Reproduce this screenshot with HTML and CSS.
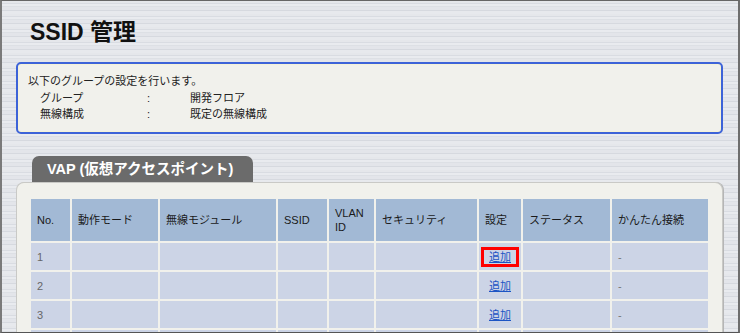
FILE: index.html
```html
<!DOCTYPE html>
<html lang="ja">
<head>
<meta charset="utf-8">
<title>SSID 管理</title>
<link rel="stylesheet" href="styles.css">
</head>
<body>
<div class="frame">
  <h1 class="title">SSID 管理</h1>
  <div class="info">
    <div class="info-lead">以下のグループの設定を行います。</div>
    <div class="info-grid">
      <span>グループ</span><span>:</span><span>開発フロア</span>
      <span>無線構成</span><span>:</span><span>既定の無線構成</span>
    </div>
  </div>
  <div class="tab">VAP (仮想アクセスポイント)</div>
  <div class="panel">
    <table class="vap">
      <thead>
        <tr>
          <th class="c-no">No.</th>
          <th class="c-mode">動作モード</th>
          <th class="c-mod">無線モジュール</th>
          <th class="c-ssid">SSID</th>
          <th class="c-vlan">VLAN ID</th>
          <th class="c-sec">セキュリティ</th>
          <th class="c-set">設定</th>
          <th class="c-stat">ステータス</th>
          <th class="c-easy">かんたん接続</th>
        </tr>
      </thead>
      <tbody>
        <tr>
          <td class="num">1</td><td></td><td></td><td></td><td></td><td></td>
          <td class="set"><span class="hl"><a href="#">追加</a></span></td><td></td><td class="dash">-</td>
        </tr>
        <tr>
          <td class="num">2</td><td></td><td></td><td></td><td></td><td></td>
          <td class="set"><a href="#">追加</a></td><td></td><td class="dash">-</td>
        </tr>
        <tr>
          <td class="num">3</td><td></td><td></td><td></td><td></td><td></td>
          <td class="set"><a href="#">追加</a></td><td></td><td class="dash">-</td>
        </tr>
        <tr>
          <td></td><td></td><td></td><td></td><td></td><td></td><td></td><td></td><td></td>
        </tr>
      </tbody>
    </table>
  </div>
</div>
</body>
</html>
```

FILE: styles.css
```css
html, body {
  margin: 0;
  padding: 0;
}
body {
  font-family: "Liberation Sans", "Noto Sans CJK JP", sans-serif;
  color: #222;
}
.frame {
  box-sizing: border-box;
  width: 740px;
  height: 333px;
  overflow: hidden;
  border-top: 1px solid #666;
  border-left: 2px solid #7a7a7a;
  border-right: 2px solid #6e6e6e;
  border-bottom: 1px solid #555;
  background-color: #e2e4e9;
  background-image: repeating-linear-gradient(to bottom,
    #e5e7eb 0px, #e5e7eb 2px,
    #d9dce2 2px, #d9dce2 3px,
    #e9ebef 3px, #e9ebef 5px,
    #dde0e5 5px, #dde0e5 6px,
    #e3e5ea 6px, #e3e5ea 9px,
    #d6d9df 9px, #d6d9df 10px,
    #e7e9ed 10px, #e7e9ed 13px);
  padding-top: 18px;
}
.title {
  margin: 0 0 0 28px;
  font-size: 23px;
  line-height: 26px;
  font-weight: bold;
  color: #111;
}
.info {
  box-sizing: border-box;
  margin: 17px 0 0 14px;
  width: 707px;
  height: 72px;
  border: 2px solid #3d63d8;
  border-radius: 5px;
  background: #f1f1ec;
  box-shadow: inset 0 0 0 1px #f5f2d8;
  padding: 9px 10px 0 10px;
  font-size: 11px;
  line-height: 16.5px;
  color: #222;
}
.info-grid {
  display: grid;
  grid-template-columns: 107px 43px auto;
  padding-left: 12px;
}
.tab {
  display: inline-block;
  margin: 22px 0 0 30px;
  height: 26px;
  line-height: 27px;
  padding: 0 20px 0 15px;
  background: #6b6b6b;
  color: #fff;
  font-size: 14.5px;
  font-weight: bold;
  border-radius: 7px 7px 0 0;
  vertical-align: top;
}
.panel {
  box-sizing: border-box;
  margin-left: 14px;
  width: 707px;
  height: 200px;
  background: #f1f1ec;
  border: 1px solid #c9c9c6;
  border-bottom: none;
  border-radius: 8px 8px 0 0;
  box-shadow: 1px 0 0 #b5b5b5;
  padding: 14px 0 0 12px;
}
.vap {
  border-collapse: separate;
  border-spacing: 2px;
  font-size: 11px;
  line-height: 14px;
}
.vap th, .vap td {
  box-sizing: border-box;
  padding: 0 0 0 6px;
  text-align: left;
  vertical-align: middle;
}
.vap th {
  height: 42px;
  background: #a2b9d5;
  font-weight: normal;
  color: #1a1a1a;
}
.vap td {
  height: 27px;
  background: #ccd4e6;
  color: #666;
}
.c-no { width: 39px; }
.c-mode { width: 86px; }
.c-mod { width: 116px; }
.c-ssid { width: 49px; }
.c-vlan { width: 45px; }
.c-sec { width: 101px; }
.c-set { width: 42px; }
.c-stat { width: 87px; }
.c-easy { width: 96px; }
.vap td.set {
  padding: 0;
  text-align: center;
}
.vap td.set a {
  color: #1d55c4;
  text-decoration: underline;
}
.hl {
  display: inline-block;
  box-sizing: border-box;
  width: 38px;
  height: 20px;
  line-height: 14px;
  border: 3px solid #f00;
  vertical-align: middle;
}
.vap td.dash {
  color: #777;
}
```
